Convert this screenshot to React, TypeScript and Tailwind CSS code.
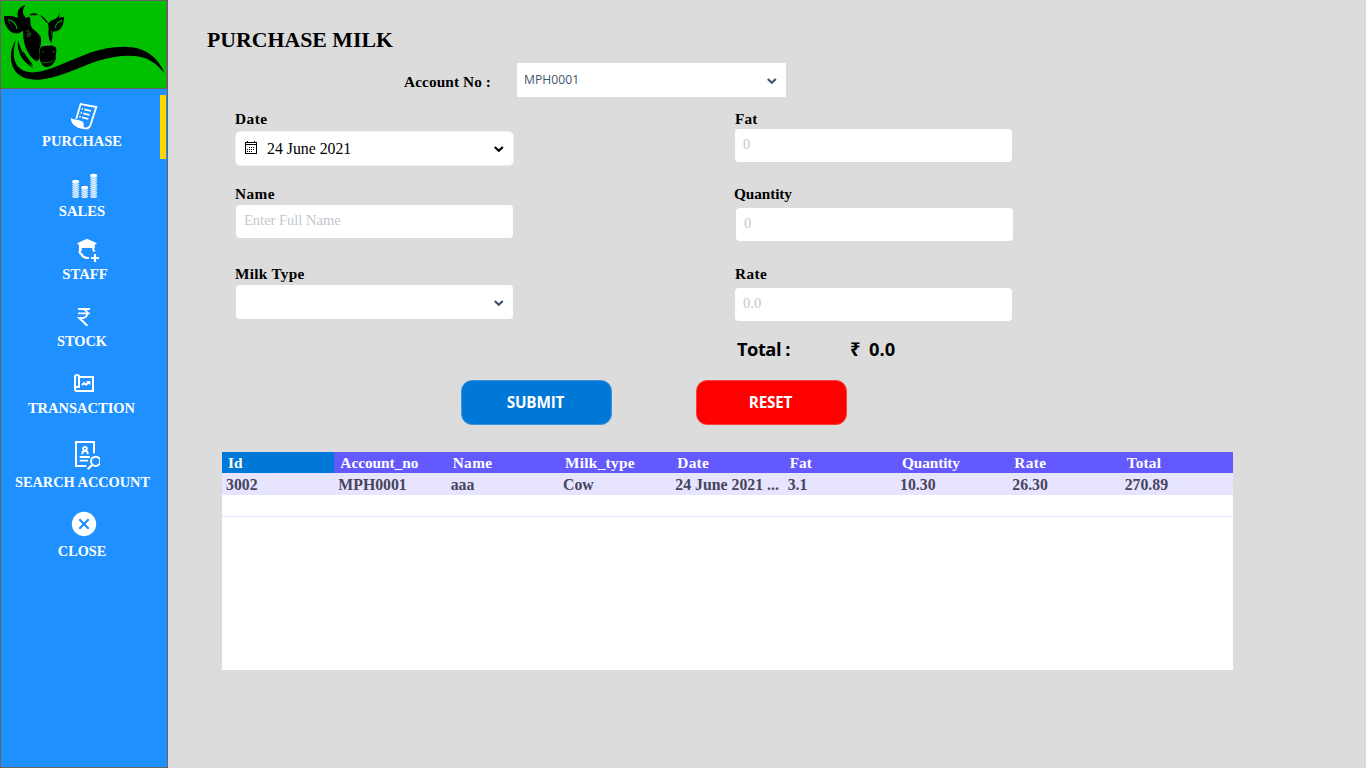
import React from "react";

const serif = "font-['Liberation_Serif',serif]";

function CowLogo() {
  return (
    <svg viewBox="6 6 492 258" className="block h-[86px] w-[164px]" fill="#000">
      {/* swoosh */}
      <path d="M48 120C32 142 26 178 42 208C56 232 84 241 118 239C170 236 230 206 290 184C340 166 400 162 432 173C460 183 478 200 494 220C482 190 458 160 420 147C380 134 322 140 270 158C210 180 150 212 104 217C72 219 50 206 43 178C39 158 42 138 48 120Z" />
      <path d="M54 120C50 152 64 186 100 203C80 182 64 156 54 120Z" />
      <path d="M68 152C72 172 82 188 100 197C88 180 78 166 68 152Z" />
      {/* horns */}
      <path d="M76 15C54 20 46 44 58 58C64 66 72 68 80 64C80 54 76 52 73 47C66 38 69 26 76 15Z" />
      <path d="M170 18C182 32 180 50 164 58C156 62 150 62 146 70C150 74 158 72 166 68C182 58 182 34 170 18Z" />
      {/* ears */}
      <path d="M12 49C34 45 54 50 68 62L76 90C64 92 60 104 40 99C20 90 12 72 12 49Z" />
      <path d="M24 58C36 59 49 68 53 86C42 90 30 78 24 58Z" fill="#00c000" />
      <path d="M27 61C38 64 48 75 50 89C38 86 30 76 27 61Z" />
      <path d="M192 51C176 50 160 60 154 76L156 94C174 98 192 84 192 51Z" />
      <path d="M186 59C175 62 168 70 163 84C175 84 184 74 186 59Z" fill="#00c000" />
      <path d="M184 63C174 67 169 75 166 84C176 82 183 74 184 63Z" />
      {/* face */}
      <path d="M68 58L88 50C94 58 89 68 94 80C100 92 116 96 122 112C126 128 120 140 118 152C116 166 122 178 110 184C96 178 84 160 77 142C69 122 68 100 70 80Z" />
      <path d="M90 43C98 38 108 39 114 44C108 46 98 46 90 46Z" />
      <path d="M118 45C130 49 138 58 144 68L142 70C132 60 126 52 118 45Z" />
      <path d="M144 68L158 72C160 90 158 112 154 130C148 122 143 102 146 88Z" />
      <path d="M78 94C83 89 91 94 92 103C90 110 84 112 79 106" fill="none" stroke="#4bae4b" strokeWidth="1.8" />
      <circle cx="85" cy="102" r="2.8" fill="none" stroke="#4bae4b" strokeWidth="1.6" />
      <path d="M151 90C156 93 157 100 154 107" fill="none" stroke="#4bae4b" strokeWidth="1.6" />
      {/* muzzle */}
      <path d="M122 142C130 136 160 134 167 142C173 152 165 164 168 176C164 184 158 198 144 201C132 202 126 196 124 189C115 178 117 156 122 142Z" />
      <path d="M127 153C130 153 132 155 131 158C129 158 128 156 127 153ZM163 153C160 153 157 155 158 158C161 158 163 156 163 153Z" fill="#00a000" />
      <path d="M124 186C134 190 148 188 160 182" fill="none" stroke="#00c000" strokeWidth="1.8" />
      <path d="M132 134H150" stroke="#5fb45f" strokeWidth="5" strokeDasharray="2 1.5" />
    </svg>
  );
}

function PurchaseIcon() {
  return (
    <svg viewBox="204 30 96 96" className="h-8 w-8 shrink-0" fill="none" stroke="#fff" strokeWidth="5.5">
      <path d="M229 86L242 42L289 51L271 106C268 113 261 116 254 115L234 110" />
      <path d="M213 84C222 90 242 89 249 96C253 101 249 110 254 116C234 116 211 106 213 84Z" fill="#fff" stroke="none" />
      <path d="M253 58L273 63M250 70L269 75M246 82L265 87" strokeWidth="5" />
      <path d="M245 56L249 57M242 68L246 69M238 80L242 81" strokeWidth="5" />
    </svg>
  );
}

function CoinStack({ x, top }: { x: number; top: number }) {
  const coins: number[] = [];
  for (let y = 320; y > top + 6; y -= 6) coins.push(y);
  return (
    <g>
      <rect x={x - 7.5} y={top + 4} width="15" height={320 - top} opacity="0.35" />
      <ellipse cx={x} cy={top + 5} rx="10.5" ry="4.5" />
      {coins.map((y) => (
        <path key={y} d={`M${x - 10.5} ${y - 3}C${x - 8} ${y + 0.8} ${x + 8} ${y + 0.8} ${x + 10.5} ${y - 3}V${y}C${x + 8} ${y + 4.2} ${x - 8} ${y + 4.2} ${x - 10.5} ${y}Z`} />
      ))}
    </g>
  );
}

function SalesIcon() {
  return (
    <svg viewBox="204 240 96 96" className="h-8 w-8 shrink-0" fill="#fff">
      <CoinStack x={227} top={269} />
      <CoinStack x={254} top={287} />
      <CoinStack x={281} top={251} />
    </svg>
  );
}

function StaffIcon() {
  return (
    <svg viewBox="204 42 96 96" className="h-8 w-8 shrink-0" fill="#fff">
      <path d="M231 70L261 56L291 70L284 75V84H243V94H237V75Z" />
      <path d="M242 74V91C236 94 239 100 244 102C247 110 254 114 267 114" fill="none" stroke="#fff" strokeWidth="6.5" />
      <path d="M280 76V90L284 95" fill="none" stroke="#fff" strokeWidth="6" />
      <path d="M285 102V126M273 114H297" stroke="#fff" strokeWidth="6.5" />
    </svg>
  );
}

function StockIcon() {
  return (
    <svg viewBox="204 243 96 96" className="h-8 w-8 shrink-0" fill="none" stroke="#fff" strokeWidth="6">
      <path d="M234 267H270M234 280H270" strokeWidth="5.5" />
      <path d="M234 267H247C266 267 266 294 247 294H238L262 317" />
    </svg>
  );
}

function TransactionIcon() {
  return (
    <svg viewBox="204 21 96 96" className="h-8 w-8 shrink-0" fill="none" stroke="#fff" strokeWidth="6">
      <path d="M238 51H279V93H231C227 93 225 90 225 86V50C225 43 237 43 237 50V81H231C227 81 225 83 225 87" />
      <path d="M246 75L252 69L258 74L266 67" strokeWidth="6" />
      <path d="M258 63H271V76Z" fill="#fff" stroke="none" />
    </svg>
  );
}

function SearchAccountIcon() {
  return (
    <svg viewBox="204 237 96 96" className="h-8 w-8 shrink-0" fill="none" stroke="#fff" strokeWidth="6">
      <path d="M282 280V246H228V318H259" />
      <circle cx="255" cy="266" r="5.5" strokeWidth="5.5" />
      <path d="M247 283V279C248 271 262 271 263 279V283" strokeWidth="5.5" />
      <path d="M239 291H270M239 302H264" strokeWidth="5.5" />
      <circle cx="287" cy="304" r="14" />
      <path d="M277 314L263 328" strokeWidth="6.5" />
    </svg>
  );
}

function CloseIcon() {
  return (
    <svg viewBox="204 54 96 96" className="h-8 w-8 shrink-0">
      <circle cx="252" cy="102" r="36.5" fill="#fff" />
      <path d="M238 88L266 116M266 88L238 116" stroke="#1e90ff" strokeWidth="6.5" />
    </svg>
  );
}

const navItems = [
  { label: "PURCHASE", icon: <PurchaseIcon />, item: "", text: "pr-1 text-[14.5px]" },
  { label: "SALES", icon: <SalesIcon />, item: "mt-5", text: "pr-1 text-[14.7px]" },
  { label: "STAFF", icon: <StaffIcon />, item: "mt-3.5", text: "-mt-px pl-0.5 text-[14.7px]" },
  { label: "STOCK", icon: <StockIcon />, item: "mt-[18px]", text: "-mt-px pr-1 text-[14.4px]" },
  { label: "TRANSACTION", icon: <TransactionIcon />, item: "mt-[17px]", text: "pr-[5px] text-[14.5px]" },
  { label: "SEARCH ACCOUNT", icon: <SearchAccountIcon />, item: "mt-[22px]", text: "mt-0.5 pr-[3px] text-[14.35px]" },
  { label: "CLOSE", icon: <CloseIcon />, item: "mt-[17px]", text: "mt-0.5 pr-1 text-[14.25px]" },
];

function Sidebar() {
  return (
    <aside className="relative flex h-full w-[168px] shrink-0 flex-col border border-[#646464] bg-[#1e90ff]">
      <div className="h-[88px] border-b border-r border-[#646464] bg-[#00c000] pl-px pt-px">
        <CowLogo />
      </div>
      <span className="absolute right-px top-[94px] h-16 w-1.5 bg-[#ffd700]" />
      <nav className="mt-[11px] flex flex-col">
        {navItems.map((n) => (
          <button key={n.label} className={`flex flex-col items-center ${n.item}`}>
            {n.icon}
            <span className={`whitespace-nowrap font-bold leading-[18px] text-white ${n.text}`}>{n.label}</span>
          </button>
        ))}
      </nav>
    </aside>
  );
}

function Chevron({ className }: { className: string }) {
  return (
    <svg viewBox="0 0 10 7" className={`h-[7px] w-2.5 ${className}`} fill="none" stroke="currentColor" strokeWidth="2.2">
      <path d="M0.8 1L4.8 4.8L8.8 1" />
    </svg>
  );
}

function CalendarIcon() {
  return (
    <svg viewBox="0 0 12 13" className="mb-0.5 h-[13px] w-3" fill="#000" shapeRendering="crispEdges">
      <path d="M0 1H12V13H0ZM1 4V12H11V4ZM1 2V3H11V2Z" fillRule="evenodd" />
      <path d="M2 0H3V2H2ZM9 0H10V2H9Z" />
      <path d="M4 6H5V7H4ZM6 6H7V7H6ZM8 6H9V7H8ZM2 8H3V9H2ZM4 8H5V9H4ZM6 8H7V9H6ZM8 8H9V9H8ZM2 10H3V11H2ZM4 10H5V11H4ZM6 10H7V11H6Z" />
    </svg>
  );
}

function Label({ text, className }: { text: string; className: string }) {
  return <label className={`block whitespace-nowrap text-[15.3px] font-bold leading-[18px] text-black ${className}`}>{text}</label>;
}

function Field({ placeholder, className }: { placeholder: string; className: string }) {
  return (
    <div className={`h-[33px] w-[277px] rounded-[4px] bg-white pl-2 pt-[7px] text-[14.5px] leading-[17px] text-[#c1c8cf] ${className}`}>
      {placeholder}
    </div>
  );
}

const columns = [
  ["Id", "3002"],
  ["Account_no", "MPH0001"],
  ["Name", "aaa"],
  ["Milk_type", "Cow"],
  ["Date", "24 June 2021 ..."],
  ["Fat", "3.1"],
  ["Quantity", "10.30"],
  ["Rate", "26.30"],
  ["Total", "270.89"],
];

const headerStyles = [
  "bg-[#0078d7]",
  "",
  "tracking-[0.4px]",
  "tracking-[0.3px]",
  "tracking-[0.3px]",
  "",
  "tracking-[-0.1px]",
  "tracking-[0.4px]",
  "tracking-[0.2px]",
];

function RecordsTable() {
  return (
    <section className="ml-[54px] mt-[27px] h-[218px] w-[1011px] bg-white font-bold">
      <div className="grid h-[21px] grid-cols-9 bg-[#6458ff] text-[15.3px] leading-[22px] text-white">
        {columns.map(([name], i) => (
          <div key={name} className={`h-[21px] whitespace-nowrap pl-1.5 ${headerStyles[i]}`}>{name}</div>
        ))}
      </div>
      <div className="grid h-[22px] grid-cols-9 bg-[#e7e4ff] text-[15.8px] leading-6 text-[#47455e]">
        {columns.map(([name, value]) => (
          <div key={name} className="whitespace-nowrap pl-1">{value}</div>
        ))}
      </div>
      <div className="h-[22px] border-b border-[#e7e4ff]" />
    </section>
  );
}

export default function App() {
  return (
    <div className={`flex h-[768px] w-[1366px] overflow-hidden bg-[#dcdcdc] ${serif}`}>
      <Sidebar />
      <main className="flex flex-1 flex-col">
        <h1 className="ml-[39px] mt-7 h-6 whitespace-nowrap text-[21.8px] font-bold leading-6 text-black">PURCHASE MILK</h1>
        <div className="ml-[236px] mt-[11px] flex h-[34px]">
          <Label text="Account No :" className="w-[113px] pt-[10px] tracking-[0.1px]" />
          <div className="flex w-[269px] items-center justify-between bg-white pl-[7px] pr-[9px] font-['Open_Sans',sans-serif] text-[12.2px] text-[#44546a]">
            <span className="leading-8">MPH0001</span>
            <Chevron className="mt-0.5 text-[#44546a]" />
          </div>
        </div>

        <div className="ml-[67px] mt-[13px] flex h-[270px]">
          <div className="w-[279px]">
            <Label text="Date" className="tracking-[0.5px]" />
            <div className="mt-[3px] flex h-[35px] items-center rounded-[5px] border border-[#eeeeee] bg-white pl-[9px] pr-[9px]">
              <CalendarIcon />
              <span className="ml-[10px] flex-1 text-[15.8px] leading-[18px] text-black">24 June 2021</span>
              <Chevron className="mt-px text-black" />
            </div>
            <Label text="Name" className="mt-[19px] tracking-[0.4px]" />
            <Field placeholder="Enter Full Name" className="ml-px mt-0.5" />
            <Label text="Milk Type" className="mt-[27px] tracking-[0.3px]" />
            <div className="ml-px mt-0.5 flex h-[34px] w-[277px] items-center justify-end rounded-[4px] bg-white pr-[9px]">
              <Chevron className="mt-0.5 text-[#44546a]" />
            </div>
          </div>
          <div className="ml-[220px] w-[280px]">
            <Label text="Fat" className="pl-px tracking-[0.1px]" />
            <Field placeholder="0" className="ml-px mt-px" />
            <Label text="Quantity" className="mt-[23px] tracking-[-0.1px]" />
            <Field placeholder="0" className="ml-0.5 mt-[5px]" />
            <Label text="Rate" className="mt-6 pl-px tracking-[0.4px]" />
            <Field placeholder="0.0" className="ml-px mt-[5px]" />
            <div className="ml-[3px] mt-4 flex whitespace-nowrap font-['Open_Sans','Noto_Sans',sans-serif] text-[18.3px] font-bold leading-6 text-black">
              <span className="w-[113px] tracking-[-0.5px]">Total :</span>
              <span className="w-[19px]">₹</span>
              <span>0.0</span>
            </div>
          </div>
        </div>

        <div className="ml-[293px] flex gap-[84px] font-['Open_Sans',sans-serif] text-[15.3px] font-bold tracking-[-0.2px] text-white">
          <button className="h-[45px] w-[151px] rounded-[11px] border border-[#3f95dc] bg-[#0078d7] pr-0.5">SUBMIT</button>
          <button className="h-[45px] w-[151px] rounded-[11px] border border-[#f64040] bg-[#ff0000] pr-0.5">RESET</button>
        </div>

        <RecordsTable />
      </main>
    </div>
  );
}
